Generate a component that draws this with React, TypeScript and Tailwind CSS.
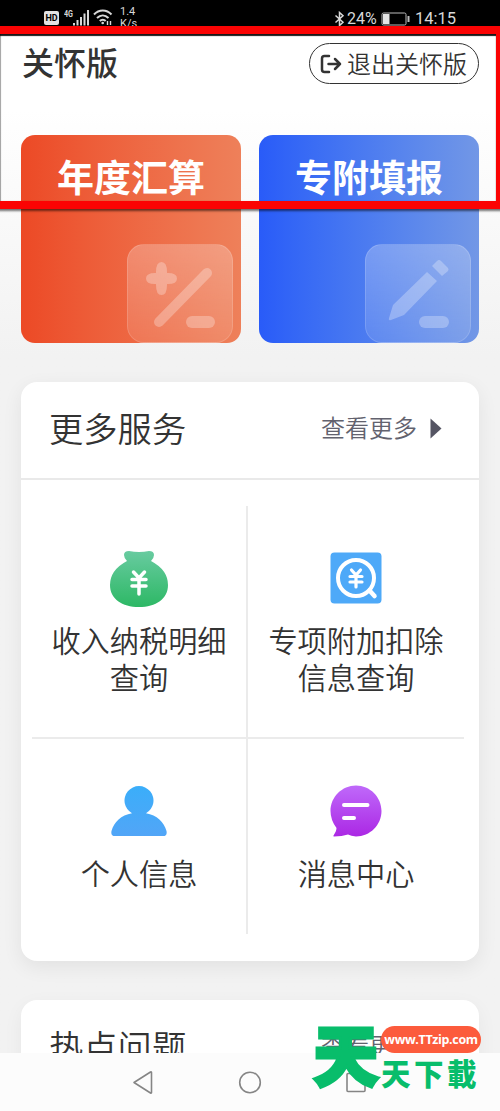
import React from 'react'

interface EntryCardProps {
  label: string
  className: string
  children: React.ReactNode
}

interface ServiceProps {
  lines: string[]
  className?: string
  children: React.ReactNode
}

function StatusBar() {
  return (
    <div className="h-[27px] bg-black text-[#d8d8d8] flex items-start justify-between overflow-hidden pl-11 pr-[44px] font-['Roboto','Noto_Sans_CJK_SC',sans-serif]">
      <div className="flex items-start">
        <div className="mt-[11px] w-[15px] h-[14px] rounded-[2px] bg-[#e2e2e2] text-black text-[9px] leading-[14px] font-bold text-center">HD</div>
        <svg className="ml-[5px] mt-[9px]" width="26" height="18" viewBox="0 0 26 18">
          <text x="0" y="8" fontSize="8.5" fontWeight="700" fill="#d8d8d8" textLength="9" lengthAdjust="spacingAndGlyphs">4G</text>
          <g fill="#d8d8d8">
            <rect x="9" y="14" width="2" height="2.5" />
            <rect x="12.5" y="11" width="2" height="5.5" />
            <rect x="16" y="8" width="2" height="8.5" />
            <rect x="19.5" y="4.5" width="2" height="12" />
            <rect x="23" y="1" width="2" height="15.5" />
          </g>
        </svg>
        <svg className="ml-[3px] mt-[9px]" width="20" height="17" viewBox="0 0 20 17" fill="none" stroke="#d8d8d8" strokeWidth="2">
          <path d="M1 5.5C6 .2 13.500 .2 18.500 5.500M4 9C7.500 5.500 12 5.500 15.500 9M6.800 12C8.500 10.200 11 10.200 12.700 12" />
          <circle cx="9.700" cy="14" r="1.300" fill="#d8d8d8" stroke="none" />
          <path d="M14.500 16v-4M17.500 12v4" strokeWidth="1.400" />
        </svg>
        <div className="ml-[7px] mt-[6px] text-[11px] leading-[12px]">
          <p>1.4</p>
          <p>K/s</p>
        </div>
      </div>
      <div className="flex items-center mt-[10px] h-[18px] text-[16px] leading-[18px]">
        <svg width="11" height="16" viewBox="0 0 11 16" fill="none" stroke="#d8d8d8" strokeWidth="1.500">
          <path d="M1.500 4.500 9 11.300 5.500 14.500v-13L9 4.700 1.500 11.500" />
        </svg>
        <span className="ml-[2px] w-[31px] text-[16px]">24%</span>
        <svg className="ml-[3px]" width="29" height="14" viewBox="0 0 29 14">
          <rect x="1" y="1" width="24" height="12" rx="1.500" fill="none" stroke="#bdbdbd" />
          <rect x="2" y="2" width="6.500" height="10" fill="#e4e4e4" />
          <rect x="26.500" y="4" width="2" height="6" fill="#bdbdbd" />
        </svg>
        <span className="ml-[5px] w-[41px] text-[16.500px] whitespace-nowrap">14:15</span>
      </div>
    </div>
  )
}

function EntryCard({ label, className, children }: EntryCardProps) {
  return (
    <div className={`flex flex-col items-end w-[220px] h-[208px] rounded-[14px] overflow-hidden ${className}`}>
      <p className="mt-[16px] w-full text-center text-white font-bold text-[37px] leading-[50px]">{label}</p>
      <div className="mt-[43px] mr-[8px] w-[106px] h-[99px] shrink-0 rounded-[17px] border border-white/15 bg-linear-to-b from-white/25 to-white/10">
        {children}
      </div>
    </div>
  )
}

function CardHeader({ title }: { title: string }) {
  return (
    <div className="flex items-center justify-between h-[96px] pl-7 pr-[37px] pb-[7px]">
      <h2 className="text-[34.300px] leading-[48px] text-[#333] font-[350]">{title}</h2>
      <div className="flex items-center gap-[13px] text-[24px] leading-[34px] text-[#62626e] font-[350]">
        <span>查看更多</span>
        <svg className="mt-[3px]" width="12" height="21" viewBox="0 0 12 21">
          <path d="M.5.5 11.500 10.500.5 20.500z" fill="#555563" />
        </svg>
      </div>
    </div>
  )
}

function Service({ lines, className = '', children }: ServiceProps) {
  return (
    <div className={`flex flex-col items-center text-[#333] text-[29.200px] leading-[37px] font-[350] ${className}`}>
      <div className="h-[56px] mb-[15px]">{children}</div>
      {lines.map((line) => (
        <p key={line} className="whitespace-nowrap">{line}</p>
      ))}
    </div>
  )
}

function MoneyBagIcon() {
  return (
    <svg width="60" height="58" viewBox="0 0 60 58">
      <defs>
        <linearGradient id="bag" x1="0" y1="0" x2="0" y2="1">
          <stop offset="0" stopColor="#68cba0" />
          <stop offset="1" stopColor="#2db865" />
        </linearGradient>
      </defs>
      <path d="M20 1Q30 3 40 1Q45 1 45 5Q45 8 42 11Q59 20 59 35C59 49 47 57 30 57S1 49 1 35Q1 20 18 11Q15 8 15 5Q15 1 20 1Z" fill="url(#bag)" />
      <path d="m24.500 22 5.500 6 5.500-6M23 29.500h14M23 36h14M30 28v16" fill="none" stroke="#fff" strokeWidth="3.500" strokeLinecap="round" />
    </svg>
  )
}

function DeductionIcon() {
  return (
    <svg className="mt-[2px]" width="52" height="52" viewBox="0 0 52 52">
      <rect x=".500" y=".500" width="51" height="51" rx="4" fill="#4ea9f8" />
      <circle cx="26" cy="26" r="18" fill="none" stroke="#fff" strokeWidth="4" />
      <path d="m39.500 38.500 5 5.500" stroke="#fff" strokeWidth="4.500" strokeLinecap="round" />
      <path d="m21.500 18 4.500 5 4.500-5M20 24.500h12M20 30h12M26 23v12" fill="none" stroke="#fff" strokeWidth="3.200" strokeLinecap="round" />
    </svg>
  )
}

function PersonIcon() {
  return (
    <svg className="mt-[2px]" width="58" height="52" viewBox="0 0 58 52">
      <defs>
        <linearGradient id="person" x1="0" y1="0" x2="0" y2="52" gradientUnits="userSpaceOnUse">
          <stop offset="0" stopColor="#3aaefa" />
          <stop offset="1" stopColor="#52a5f7" />
        </linearGradient>
      </defs>
      <path d="M22 28.200A14.500 14.500 0 1 1 36 28.200C47 30 54 37 56.500 46Q57.500 51 53 51H5Q.500 51 1.500 46C4 37 11 30 22 28.200Z" fill="url(#person)" />
    </svg>
  )
}

function MessageIcon() {
  return (
    <svg className="mt-[2px]" width="52" height="52" viewBox="0 0 52 52">
      <defs>
        <linearGradient id="message" x1="0" y1="0" x2="0" y2="1">
          <stop offset="0" stopColor="#bf69fa" />
          <stop offset="1" stopColor="#ab28e4" />
        </linearGradient>
      </defs>
      <path d="M26 .500C40 .500 51.500 12 51.500 26S40 51.500 26 51.500Q21 51 18 49.500Q12 51.500 4 51.500Q3 51.500 3.500 50.500Q6.500 46 6.500 43Q.500 35 .500 26C.500 12 12 .500 26 .500Z" fill="url(#message)" />
      <path d="M14 20h23.500M14 33h10" stroke="#fff" strokeWidth="4" strokeLinecap="round" />
    </svg>
  )
}

function NavBar() {
  return (
    <div className="flex h-[58px] bg-[#fcfcfc]">
      <svg width="500" height="58" viewBox="0 0 500 58" fill="none" stroke="#858585" strokeWidth="1.600">
        <path d="M134 29.500 150.500 19q1-.500 1 .500v20q0 1-1 .500Z" strokeLinejoin="round" />
        <circle cx="250" cy="29.500" r="10.300" />
        <rect x="347" y="20.500" width="18" height="18" rx="1" />
      </svg>
    </div>
  )
}

// Site badge over the bottom right corner
function SiteBadge() {
  return (
    <div className="absolute left-[312px] top-[1020px] flex text-[#08bd6b] font-black leading-none">
      <span className="w-[68px] h-[74px] text-[66px] leading-[64px] ml-[1px] [-webkit-text-stroke:3px_#08bd6b] [stroke-linejoin:round]">天</span>
      <div className="flex flex-col">
        <span className="mt-[6px] w-[100px] h-[27px] rounded-full bg-[#fc5b3c] text-center text-white font-bold text-[12.500px] leading-[28px] tracking-[-0.35px] whitespace-nowrap font-['Open_Sans',sans-serif]">
          www.TTzip.com
        </span>
        <span className="mt-[2px] text-[29.500px] leading-[34px] tracking-[3.500px] whitespace-nowrap font-['Noto_Sans_CJK_TC',sans-serif]">天下載</span>
      </div>
    </div>
  )
}

export default function App() {
  return (
    <div className="relative w-[500px] h-[1111px] overflow-hidden flex flex-col bg-[#f2f2f2] font-['Noto_Sans_CJK_SC',sans-serif]">
      <StatusBar />

      <main className="h-[1026px] overflow-hidden bg-linear-to-b from-white from-[8%] to-[#f2f2f2] to-[32%]">
        <header className="flex items-center justify-between pl-[22px] pr-[21px] pt-[16px]">
          <h1 className="text-[32px] leading-[40px] font-medium text-[#333] -mt-[6px]">关怀版</h1>
          <button className="flex items-center w-[170px] h-[41px] rounded-full border-[1.500px] border-[#333] pl-[10px] text-[24px] text-[#333] font-[350] whitespace-nowrap">
            <svg className="mr-[5px]" width="22" height="20" viewBox="0 0 22 20" fill="none" stroke="#333" strokeWidth="2.500" strokeLinecap="round" strokeLinejoin="round">
              <path d="M9 2H4.500Q2 2 2 4.500v11Q2 18 4.500 18H9M8.500 10H20M15 5l5 5-5 5" />
            </svg>
            <span className="leading-[34px] -mt-[2px]">退出关怀版</span>
          </button>
        </header>

        <section className="flex justify-between mt-[50.500px] pl-[21px] pr-[21px]">
          <EntryCard label="年度汇算" className="bg-linear-to-r from-[#ec4925] to-[#ee805a]">
            <svg width="104" height="98" viewBox="0 0 104 98" stroke="#fff" strokeOpacity=".28" strokeLinecap="round">
              <path d="M28 27q0-10 5.500-10T39 27v1h1q9 0 9 5.500T40 39h-1v1q0 10-5.500 10T28 40v-1h-1q-9 0-9-5.500T27 28h1Z" fill="#fff" fillOpacity=".28" stroke="none" />
              <path d="M31 77 79 28" strokeWidth="10" />
              <path d="M64 77h17" strokeWidth="12" />
            </svg>
          </EntryCard>
          <EntryCard label="专附填报" className="bg-linear-to-r from-[#295bf8] to-[#7297e6]">
            <svg width="104" height="98" viewBox="0 0 104 98" fill="#fff" fillOpacity=".28">
              <path d="M61 27 71 36 38 70 25 75Q22 76 23 73L27 60Z" />
              <path d="M66 21 71 16Q73 14 75 16L82 23Q83 24 82 26L76 31Z" />
              <rect x="53" y="71" width="30" height="12" rx="6" />
            </svg>
          </EntryCard>
        </section>

        <section className="mx-[21px] mt-[39.500px] h-[579px] rounded-[16px] bg-white shadow-[0_6px_20px_rgba(0,0,0,0.07)]">
          <CardHeader title="更多服务" />
          <div className="border-t-2 border-[#e9e9e9] pt-[26px] pl-[11px] pr-[15px]">
            <div className="grid grid-cols-[216px_216px] grid-rows-[233px_195px]">
              <Service lines={['收入纳税明细', '查询']} className="pt-[44px] border-r-2 border-b-2 border-[#ebebeb]">
                <MoneyBagIcon />
              </Service>
              <Service lines={['专项附加扣除', '信息查询']} className="pt-[44px] border-b-2 border-[#ebebeb]">
                <DeductionIcon />
              </Service>
              <Service lines={['个人信息']} className="pt-[44px] border-r-2 border-[#ebebeb]">
                <PersonIcon />
              </Service>
              <Service lines={['消息中心']} className="pt-[44px]">
                <MessageIcon />
              </Service>
            </div>
          </div>
        </section>

        <section className="mx-[21px] mt-[39px] h-[120px] rounded-t-[16px] bg-white shadow-[0_6px_20px_rgba(0,0,0,0.05)]">
          <CardHeader title="热点问题" />
        </section>
      </main>

      <NavBar />

      {/* Highlight frame around the header area */}
      <div className="absolute -left-[8px] top-[26px] w-[512px] h-[183px] border-8 border-[#fb0303] shadow-[0_2px_2px_rgba(0,0,0,0.55),inset_0_2px_1px_rgba(0,0,0,0.9),inset_1px_0_1px_rgba(0,0,0,0.3)]" />
      <SiteBadge />
    </div>
  )
}
